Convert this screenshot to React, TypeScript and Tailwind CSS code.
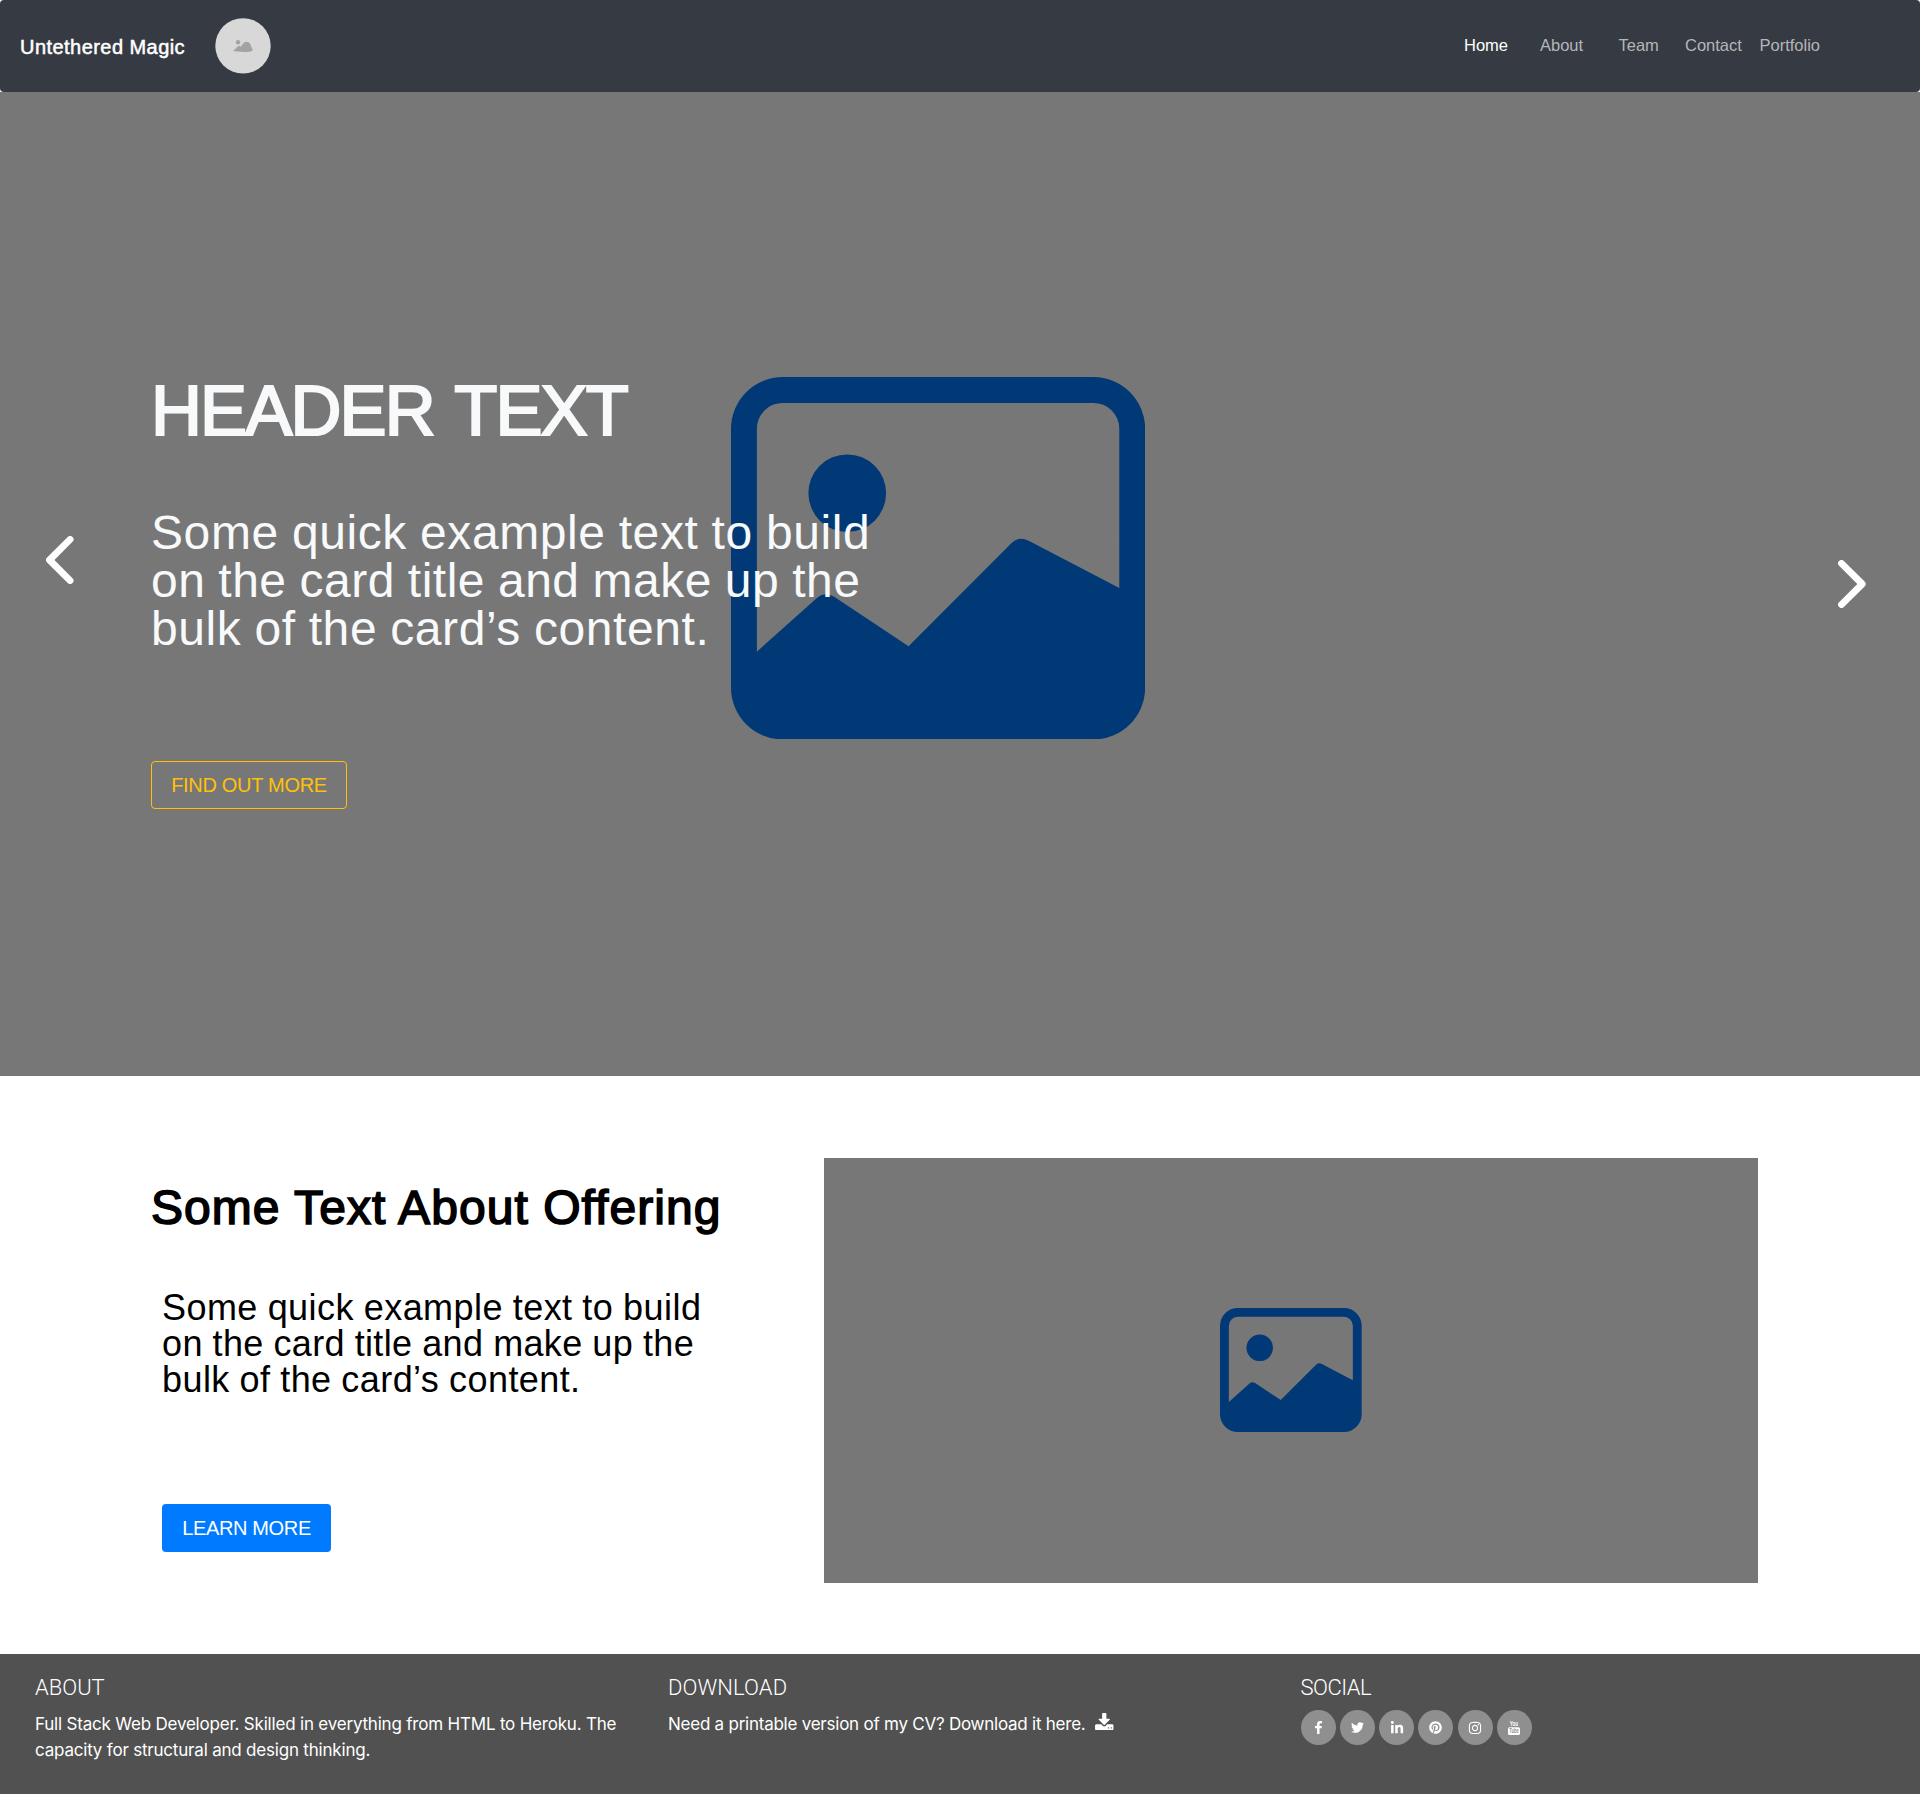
import React from "react";
import { FaTwitter, FaLinkedinIn, FaPinterest, FaInstagram } from "react-icons/fa";

function Picture({ className }: { className: string }) {
  return (
    <svg viewBox="0 0 16 14" className={className} fill="#003976">
      <path
        fillRule="evenodd"
        d="M2 0h12a2 2 0 0 1 2 2v10a2 2 0 0 1-2 2H2a2 2 0 0 1-2-2V2a2 2 0 0 1 2-2zM1 10.61L3.33 8.53Q3.62 8.29 3.97 8.48L6.86 10.4L10.85 6.4Q11.13 6.14 11.5 6.33L15 8.15V2a1 1 0 0 0-1-1H2a1 1 0 0 0-1 1z"
      />
      <circle cx="4.49" cy="4.49" r="1.5" />
    </svg>
  );
}

function Chevron({ className, points }: { className: string; points: string }) {
  return (
    <svg viewBox="0 0 28 48" className={className}>
      <polyline points={points} fill="none" stroke="#fff" strokeWidth="6.8" strokeLinecap="round" strokeLinejoin="round" />
    </svg>
  );
}

function Avatar() {
  return (
    <svg viewBox="0 0 56 56" className="ml-[31px] h-[56px] w-[56px]">
      <circle cx="28" cy="27.9" r="27.7" fill="#d8d8d8" />
      <circle cx="23" cy="24.2" r="2.2" fill="#a3a3a3" />
      <path
        fill="#a3a3a3"
        d="M17.9 32.7c1.6-.6 3.600-3.300 5.200-4.500 1-.7 1.800-.3 2.600.6 1.400-1.600 2.700-4.700 5-4.900h2.200c2.400.3 3.500 5.200 4.500 6.900.6 1.400 0 2.300-1.600 2.700-3.900.7-9.200.7-12.900.1-1.800-.3-3.800-.4-5-.9z"
      />
    </svg>
  );
}

function FacebookIcon() {
  return (
    <svg viewBox="479 0 864 1664" className="h-[13.5px] w-[7px]" fill="currentColor">
      <path d="M1343 12v264h-157q-86 0-116 36t-30 108v189h293l-39 296h-254v759h-306v-759h-255v-296h255v-218q0-186 104-288.5t277-102.5q147 0 228 12z" />
    </svg>
  );
}

function YoutubeIcon() {
  return (
    <svg viewBox="0 0 12 14" className="h-[14px] w-[12px] overflow-visible" fill="currentColor">
      <text x="6" y="5.2" fontSize="7" fontWeight="700" textAnchor="middle" textLength="8.4" lengthAdjust="spacingAndGlyphs" fontFamily="Liberation Sans, sans-serif">
        You
      </text>
      <rect x="0" y="6.2" width="12" height="7.8" rx="1.5" />
      <text x="6" y="12.4" fontSize="6.5" fontWeight="700" fill="#8f8f8f" textAnchor="middle" textLength="9.4" lengthAdjust="spacingAndGlyphs" fontFamily="Liberation Sans, sans-serif">
        Tube
      </text>
    </svg>
  );
}

function DownloadIcon() {
  return (
    <svg viewBox="0 0 1664 1536" className="ml-[9.5px] mt-[2px] h-[17px] w-[18.5px]" fill="currentColor">
      <path d="M1280 1344q0-26-19-45t-45-19-45 19-19 45 19 45 45 19 45-19 19-45zm256 0q0-26-19-45t-45-19-45 19-19 45 19 45 45 19 45-19 19-45zm128-224v320q0 40-28 68t-68 28h-1472q-40 0-68-28t-28-68v-320q0-40 28-68t68-28h465l135 136q58 56 136 56t136-56l136-136h464q40 0 68 28t28 68zm-325-569q17 41-14 70l-448 448q-18 19-45 19t-45-19l-448-448q-31-29-14-70 17-39 59-39h256v-448q0-26 19-45t45-19h256q26 0 45 19t19 45v448h256q42 0 59 39z" />
    </svg>
  );
}

function SocialLink({ children }: { children: React.ReactNode }) {
  return (
    <a className="flex h-[35px] w-[35px] items-center justify-center rounded-full bg-[#8f8f8f]">{children}</a>
  );
}

export default function App() {
  return (
    <div className="w-[1920px] bg-white font-['Liberation_Sans',sans-serif]">
      <nav className="flex h-[92px] items-center rounded-[4px] bg-[#363a42] pl-5 text-[16.5px]">
        <span className="w-[164px] whitespace-nowrap pt-[2px] text-[20px] leading-6 tracking-[0.45px] text-white [-webkit-text-stroke:0.5px_#fff]">
          Untethered Magic
        </span>
        <Avatar />
        <div className="ml-auto flex w-[456px] pb-[2px] leading-5 text-[#b4b6b9]">
          <a className="w-[76px] text-white">Home</a>
          <a className="w-[78.5px]">About</a>
          <a className="w-[66.5px]">Team</a>
          <a className="w-[74.5px]">Contact</a>
          <a>Portfolio</a>
        </div>
      </nav>

      <header className="relative h-[984px] bg-[#777] pl-[151px] pt-[283px]">
        <Picture className="absolute left-[730.7px] top-[285px] h-[362.4px] w-[414.2px]" />
        <Chevron className="absolute left-[46px] top-[444px] h-12 w-7" points="24.1,3.4 3.5,24 24.1,44.6" />
        <Chevron className="absolute left-[1838px] top-[468px] h-12 w-7" points="3.5,3.4 24.2,24 3.5,44.6" />
        <div className="relative">
          <h1 className="text-[70.5px] leading-[72px] tracking-[-1.85px] [word-spacing:4px] text-[#f8f9fa] [-webkit-text-stroke:2.2px_#f8f9fa]">
            HEADER TEXT
          </h1>
          <p className="mt-[62px] flex flex-col whitespace-nowrap text-[48px] leading-[48px] [word-spacing:-0.8px] text-[#f8f9fa]">
            <span className="tracking-[0.59px]">Some quick example text to build</span>
            <span className="tracking-[0.48px]">on the card title and make up the</span>
            <span className="tracking-[0.57px]">bulk of the card’s content.</span>
          </p>
          <button className="mt-[108px] flex h-12 w-[196px] items-center justify-center whitespace-nowrap rounded-[4px] border border-[#ffc107] text-[20px] tracking-[-0.3px] text-[#ffc107]">
            FIND OUT MORE
          </button>
        </div>
      </header>

      <section className="flex h-[578px] pl-[151px]">
        <div className="w-[673px] pt-[108px] text-black">
          <h2 className="whitespace-nowrap text-[48px] leading-[48px] tracking-[1.05px] [-webkit-text-stroke:1.6px_#000]">
            Some Text About Offering
          </h2>
          <p className="ml-[11px] mt-[58px] flex flex-col whitespace-nowrap text-[36px] leading-[36px] [word-spacing:-0.6px]">
            <span className="tracking-[0.44px]">Some quick example text to build</span>
            <span className="tracking-[0.36px]">on the card title and make up the</span>
            <span className="tracking-[0.42px]">bulk of the card’s content.</span>
          </p>
          <button className="ml-[11px] mt-[106px] flex h-12 w-[169px] items-center justify-center whitespace-nowrap rounded-[4px] bg-[#007bff] text-[20px] tracking-[-0.35px] text-white">
            LEARN MORE
          </button>
        </div>
        <div className="mt-[82px] flex h-[425px] w-[934px] items-center justify-center bg-[#777]">
          <Picture className="mb-px h-[124px] w-[141.7px]" />
        </div>
      </section>

      <footer className="flex h-[140px] bg-[#515151] pl-[35px] pt-[21px] text-white">
        <div className="w-[633px]">
          <h3 className="font-['Roboto',sans-serif] text-[22px] font-light leading-[26px]">ABOUT</h3>
          <p className="mt-[10px] whitespace-nowrap font-['Inter',sans-serif] text-[17px] leading-[26px] tracking-[-0.2px]">
            Full Stack Web Developer. Skilled in everything from HTML to Heroku. The
            <br />
            capacity for structural and design thinking.
          </p>
        </div>
        <div className="w-[632.5px]">
          <h3 className="font-['Roboto',sans-serif] text-[22px] font-light leading-[26px] tracking-[0.1px]">DOWNLOAD</h3>
          <div className="mt-[10px] flex whitespace-nowrap font-['Inter',sans-serif] text-[17px] leading-[26px] tracking-[-0.24px]">
            Need a printable version of my CV? Download it here.
            <DownloadIcon />
          </div>
        </div>
        <div>
          <h3 className="font-['Roboto',sans-serif] text-[22px] font-light leading-[26px] tracking-[-0.5px]">SOCIAL</h3>
          <div className="mt-[9px] flex gap-[4.3px]">
            <SocialLink><FacebookIcon /></SocialLink>
            <SocialLink><FaTwitter size={13} /></SocialLink>
            <SocialLink><FaLinkedinIn size={14} /></SocialLink>
            <SocialLink><FaPinterest size={13} /></SocialLink>
            <SocialLink><FaInstagram size={14} /></SocialLink>
            <SocialLink><YoutubeIcon /></SocialLink>
          </div>
        </div>
      </footer>
    </div>
  );
}
